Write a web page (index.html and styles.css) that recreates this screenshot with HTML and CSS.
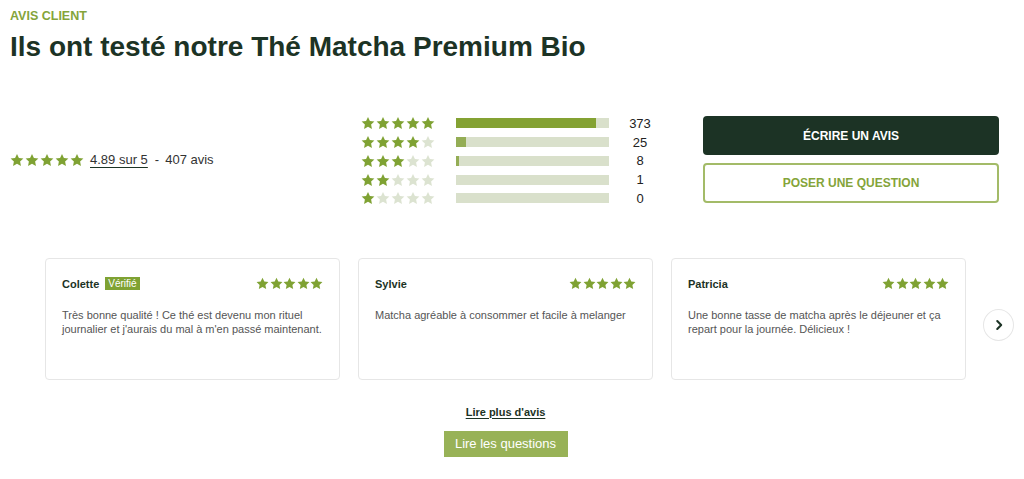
FILE: index.html
```html
<!DOCTYPE html>
<html lang="fr">
<head>
<meta charset="utf-8">
<title>Avis client</title>
<link rel="stylesheet" href="styles.css">
</head>
<body>
<svg width="0" height="0" class="defs" aria-hidden="true">
  <symbol id="star" viewBox="0 0 24 23"><path d="M12 1L15.29 7.97 22.94 8.95 17.33 14.23 18.76 21.8 12 18.1 5.24 21.8 6.67 14.23 1.06 8.95 8.71 7.97Z"/></symbol>
</svg>
<div class="page">
  <div class="eyebrow">AVIS CLIENT</div>
  <h1 class="title">Ils ont testé notre Thé Matcha Premium Bio</h1>

  <section class="summary">
    <div class="overall">
      <span class="stars stars-md">
        <svg><use href="#star"/></svg><svg><use href="#star"/></svg><svg><use href="#star"/></svg><svg><use href="#star"/></svg><svg><use href="#star"/></svg>
      </span>
      <a class="score" href="#">4.89 sur 5</a>
      <span class="sep">-</span>
      <span class="count">407 avis</span>
    </div>

    <div class="histogram">
      <div class="hrow">
        <span class="stars stars-md"><svg><use href="#star"/></svg><svg><use href="#star"/></svg><svg><use href="#star"/></svg><svg><use href="#star"/></svg><svg><use href="#star"/></svg></span>
        <span class="bar"><span class="fill" style="width:91.6%"></span></span>
        <span class="num">373</span>
      </div>
      <div class="hrow">
        <span class="stars stars-md"><svg><use href="#star"/></svg><svg><use href="#star"/></svg><svg><use href="#star"/></svg><svg><use href="#star"/></svg><svg class="off"><use href="#star"/></svg></span>
        <span class="bar"><span class="fill light" style="width:6.4%"></span></span>
        <span class="num">25</span>
      </div>
      <div class="hrow">
        <span class="stars stars-md"><svg><use href="#star"/></svg><svg><use href="#star"/></svg><svg><use href="#star"/></svg><svg class="off"><use href="#star"/></svg><svg class="off"><use href="#star"/></svg></span>
        <span class="bar"><span class="fill light" style="width:2%"></span></span>
        <span class="num">8</span>
      </div>
      <div class="hrow">
        <span class="stars stars-md"><svg><use href="#star"/></svg><svg><use href="#star"/></svg><svg class="off"><use href="#star"/></svg><svg class="off"><use href="#star"/></svg><svg class="off"><use href="#star"/></svg></span>
        <span class="bar"><span class="fill" style="width:0%"></span></span>
        <span class="num">1</span>
      </div>
      <div class="hrow">
        <span class="stars stars-md"><svg><use href="#star"/></svg><svg class="off"><use href="#star"/></svg><svg class="off"><use href="#star"/></svg><svg class="off"><use href="#star"/></svg><svg class="off"><use href="#star"/></svg></span>
        <span class="bar"><span class="fill" style="width:0%"></span></span>
        <span class="num">0</span>
      </div>
    </div>

    <div class="actions">
      <a class="btn btn-dark" href="#">ÉCRIRE UN AVIS</a>
      <a class="btn btn-outline" href="#">POSER UNE QUESTION</a>
    </div>
  </section>

  <div class="reviews">
    <section class="carousel">
      <div class="cards">
        <article class="card">
          <div class="card-head">
            <span class="name">Colette</span>
            <span class="badge">Vérifié</span>
            <span class="stars stars-sm"><svg><use href="#star"/></svg><svg><use href="#star"/></svg><svg><use href="#star"/></svg><svg><use href="#star"/></svg><svg><use href="#star"/></svg></span>
          </div>
          <p class="review">Très bonne qualité ! Ce thé est devenu mon rituel journalier et j'aurais du mal à m'en passé maintenant.</p>
        </article>
        <article class="card">
          <div class="card-head">
            <span class="name">Sylvie</span>
            <span class="stars stars-sm"><svg><use href="#star"/></svg><svg><use href="#star"/></svg><svg><use href="#star"/></svg><svg><use href="#star"/></svg><svg><use href="#star"/></svg></span>
          </div>
          <p class="review">Matcha agréable à consommer et facile à melanger</p>
        </article>
        <article class="card">
          <div class="card-head">
            <span class="name">Patricia</span>
            <span class="stars stars-sm"><svg><use href="#star"/></svg><svg><use href="#star"/></svg><svg><use href="#star"/></svg><svg><use href="#star"/></svg><svg><use href="#star"/></svg></span>
          </div>
          <p class="review">Une bonne tasse de matcha après le déjeuner et ça repart pour la journée. Délicieux !</p>
        </article>
      </div>
      <button class="next" aria-label="Suivant">
        <svg viewBox="0 0 16 16"><path d="M6 3.5l4.5 4.5L6 12.5" fill="none" stroke="#1c3325" stroke-width="2.4" stroke-linecap="round" stroke-linejoin="round"/></svg>
      </button>
    </section>

    <div class="more">
      <a class="more-link" href="#">Lire plus d'avis</a>
      <a class="btn-questions" href="#">Lire les questions</a>
    </div>
  </div>
</div>
</body>
</html>
```

FILE: styles.css
```css
* { box-sizing: border-box; }
html, body { margin: 0; background: #fff; }
body { font-family: "Liberation Sans", Arial, sans-serif; color: #333; }
.defs { position: absolute; }

.page { padding: 8px 10px 0 10px; }

.eyebrow {
  font-size: 12.5px;
  line-height: 16px;
  font-weight: 700;
  color: #84a43a;
}
.title {
  margin: 7px 0 0;
  font-size: 28px;
  line-height: 32px;
  font-weight: 700;
  color: #1c3325;
}

.summary {
  margin-top: 51px;
  display: grid;
  grid-template-columns: 351px 342px 296px;
  align-items: start;
}

.stars { display: inline-flex; }
.stars svg { fill: #7fa233; flex: none; }
.stars svg.off { fill: #dce3d1; }
.stars-md { gap: 1px; }
.stars-md svg { width: 14px; height: 14px; }
.stars-sm { gap: 0.5px; }
.stars-sm svg { width: 13px; height: 13px; }

.overall {
  align-self: center;
  display: flex;
  align-items: center;
  font-size: 13px;
  margin-top: -2px;
}
.overall .stars { margin-right: 6px; }
.score {
  color: #333;
  text-decoration: underline;
  text-decoration-color: #1c3325;
  text-underline-offset: 3px;
}
.sep { margin: 0 6px 0 7px; }

.histogram { display: flex; flex-direction: column; }
.hrow {
  height: 18.75px;
  display: flex;
  align-items: center;
}
.bar {
  margin-left: 21px;
  width: 153px;
  height: 10px;
  background: #d9e0cb;
  display: flex;
}
.fill { background: #84a233; height: 100%; }
.fill.light { background: #94ad55; }
.num {
  width: 62px;
  text-align: center;
  font-size: 13px;
  color: #222;
}

.actions {
  margin-top: 2px;
  display: flex;
  flex-direction: column;
  gap: 8px;
}
.btn {
  display: flex;
  align-items: center;
  justify-content: center;
  border-radius: 4px;
  font-size: 12px;
  font-weight: 700;
  text-decoration: none;
}
.btn-dark {
  height: 39px;
  background: #1c3325;
  color: #fff;
}
.btn-outline {
  height: 40px;
  border: 2px solid #a3bb68;
  color: #84a43a;
  background: #fff;
}

.reviews {
  margin-top: 50px;
  margin-left: 35px;
}
.carousel {
  display: flex;
  align-items: flex-start;
}
.cards { display: flex; gap: 18px; }
.card {
  width: 295px;
  height: 122px;
  border: 1px solid #e6e6e6;
  border-radius: 4px;
  padding: 18px 16px 0 16px;
}
.card-head {
  display: flex;
  align-items: center;
  height: 14px;
}
.name {
  font-size: 11px;
  font-weight: 700;
  color: #1c3325;
}
.badge {
  margin-left: 6px;
  background: #7fa233;
  color: #fff;
  font-size: 10px;
  line-height: 13px;
  padding: 0 3px;
}
.card-head .stars { margin-left: auto; }
.review {
  margin: 17px 0 0;
  font-size: 11px;
  line-height: 14px;
  color: #555;
}

.next {
  margin: 51px 0 0 17px;
  width: 32px;
  height: 32px;
  border-radius: 50%;
  border: 1px solid #e6e6e6;
  background: #fff;
  padding: 0;
  display: flex;
  align-items: center;
  justify-content: center;
}
.next svg { width: 14px; height: 14px; }

.more {
  width: 921px;
  display: flex;
  flex-direction: column;
  align-items: center;
  margin-top: 25px;
}
.more-link {
  font-size: 11px;
  line-height: 14px;
  font-weight: 700;
  color: #1c3325;
  text-decoration: underline;
  text-underline-offset: 2px;
}
.btn-questions {
  margin-top: 12px;
  width: 124px;
  height: 26px;
  background: #98b257;
  color: #fff;
  font-size: 13px;
  display: flex;
  align-items: center;
  justify-content: center;
  text-decoration: none;
}
```
